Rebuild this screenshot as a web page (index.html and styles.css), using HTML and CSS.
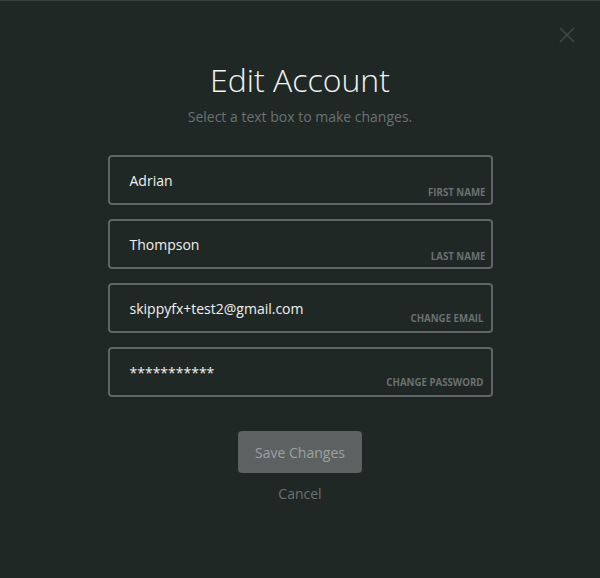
FILE: index.html
```html
<!DOCTYPE html>
<html lang="en">
<head>
<meta charset="UTF-8">
<meta name="viewport" content="width=device-width, initial-scale=1.0">
<title>Edit Account</title>
<link rel="stylesheet" href="styles.css">
</head>
<body>
<div class="modal">
  <!-- close button, top right -->
  <button class="close" aria-label="Close">
    <svg width="18" height="18" viewBox="0 0 18 18">
      <path d="M2 2 L16 16 M16 2 L2 16" stroke="currentColor" stroke-width="1.6" fill="none"/>
    </svg>
  </button>

  <h1 class="title">Edit Account</h1>
  <p class="subtitle">Select a text box to make changes.</p>

  <div class="fields">
    <div class="field">
      <div class="value">Adrian</div>
      <div class="label">First Name</div>
    </div>
    <div class="field">
      <div class="value">Thompson</div>
      <div class="label">Last Name</div>
    </div>
    <div class="field field-change">
      <div class="value">skippyfx+test2@gmail.com</div>
      <div class="label">Change Email</div>
    </div>
    <div class="field field-change">
      <div class="value">***********</div>
      <div class="label">Change Password</div>
    </div>
  </div>

  <button class="save">Save Changes</button>
  <a class="cancel" href="#">Cancel</a>
</div>
</body>
</html>
```

FILE: styles.css
```css
body, html {
  margin: 0;
  height: 100%;
  background-color: #202826;
  font-family: "Open Sans", "DejaVu Sans", sans-serif;
}

.modal {
  position: relative;
  box-sizing: border-box;
  height: 578px;
  border-top: 1px solid #3a4141;
  padding-top: 59px;
  display: flex;
  flex-direction: column;
  align-items: center;
}

.close {
  position: absolute;
  top: 25px;
  right: 24px;
  padding: 0;
  border: none;
  background: none;
  color: #3e4747;
  cursor: pointer;
}

.close svg {
  display: block;
}

.title {
  margin: 0;
  font-size: 32px;
  line-height: 40px;
  font-weight: 300;
  color: #f2f2f2;
}

.subtitle {
  margin: 7px 0 0;
  font-size: 14px;
  line-height: 20px;
  color: #6a7172;
}

.fields {
  margin-top: 28px;
  display: flex;
  flex-direction: column;
  gap: 14px;
}

.field {
  box-sizing: border-box;
  width: 385px;
  height: 50px;
  border: 2px solid #5d6466;
  border-radius: 4px;
  padding: 14px 5px 0 20px;
  display: flex;
  flex-direction: column;
}

.value {
  font-size: 14px;
  line-height: 20px;
  color: #f0f0f0;
}

.label {
  margin-top: -4px;
  align-self: flex-end;
  font-size: 9.7px;
  line-height: 12px;
  font-weight: 700;
  text-transform: uppercase;
  color: #6a7172;
}

/* email / password boxes sit their hint a little higher */
.field-change .label {
  margin-top: -6px;
  margin-right: 2px;
}

.save {
  margin-top: 34px;
  width: 124px;
  height: 42px;
  border: none;
  border-radius: 4px;
  background-color: #5c6261;
  color: #9ca1a1;
  font-family: inherit;
  font-size: 14px;
  cursor: pointer;
}

.cancel {
  margin-top: 11px;
  font-size: 14px;
  line-height: 20px;
  color: #6a7172;
  text-decoration: none;
}
```
